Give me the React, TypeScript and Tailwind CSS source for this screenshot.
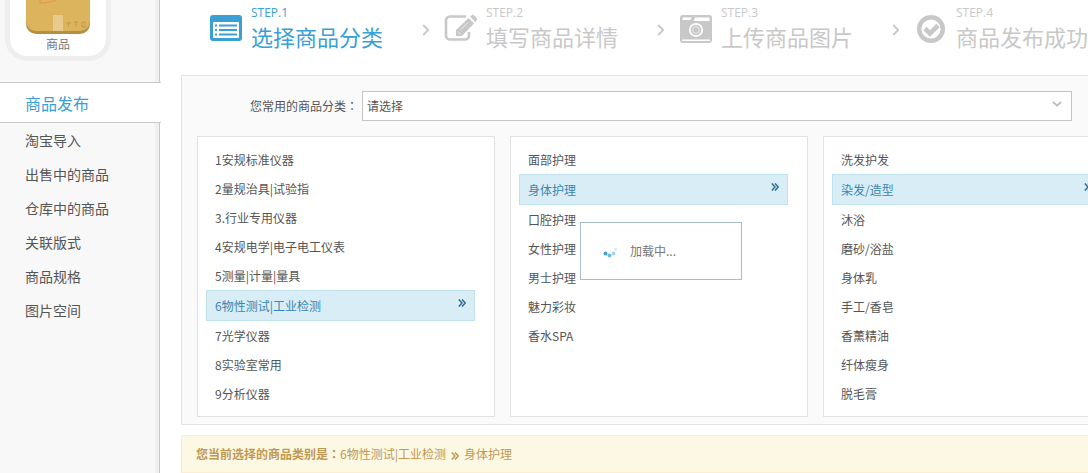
import { useState } from 'react'
import clsx from 'clsx'

const navItems = ['淘宝导入', '出售中的商品', '仓库中的商品', '关联版式', '商品规格', '图片空间']

const categories = [
  ['1安规标准仪器', '2量规治具|试验指', '3.行业专用仪器', '4安规电学|电子电工仪表', '5测量|计量|量具', '6物性测试|工业检测', '7光学仪器', '8实验室常用', '9分析仪器'],
  ['面部护理', '身体护理', '口腔护理', '女性护理', '男士护理', '魅力彩妆', '香水SPA'],
  ['洗发护发', '染发/造型', '沐浴', '磨砂/浴盐', '身体乳', '手工/香皂', '香薰精油', '纤体瘦身', '脱毛膏'],
]

const steps = [
  { label: 'STEP.1', title: '选择商品分类', icon: <ListIcon /> },
  { label: 'STEP.2', title: '填写商品详情', icon: <EditIcon /> },
  { label: 'STEP.3', title: '上传商品图片', icon: <CameraIcon /> },
  { label: 'STEP.4', title: '商品发布成功', icon: <CheckIcon /> },
]

export default function App() {
  const [selected, setSelected] = useState([5, 1, 1])

  const handleSelect = (column: number, index: number) => {
    setSelected(selected.map((value, i) => (i === column ? index : value)))
  }

  return (
    <div className="flex min-h-screen overflow-hidden bg-white font-['Noto_Sans_CJK_SC',sans-serif] text-xs text-[#555]">
      <Sidebar />
      <main className="min-w-max flex-1 pl-[21px]">
        <Steps />
        <section className="border border-[#e2e2e2] bg-[#fafafa] px-[15px] pt-[15px] pb-[7px]">
          <div className="flex items-center pl-[53px]">
            <label htmlFor="common">
              您常用的商品分类<Colon />
            </label>
            <div className="relative ml-1">
              <select
                id="common"
                className="block h-[30px] w-[710px] appearance-none border border-[#c4c4c4] bg-white px-1 text-xs text-[#555]"
              >
                <option>请选择</option>
              </select>
              <svg viewBox="0 0 10 6" className="pointer-events-none absolute top-2.5 right-2.5 h-1.5 w-2.5 text-[#bbb]">
                <path d="M1 1l4 3.6L9 1" fill="none" stroke="currentColor" strokeWidth="1.8" />
              </svg>
            </div>
          </div>
          <div className="relative mt-[15px] flex gap-[15px]">
            {categories.map((items, column) => (
              <CategoryList
                key={column}
                items={items}
                selected={selected[column]}
                onSelect={(index) => handleSelect(column, index)}
              />
            ))}
            <Loading />
          </div>
        </section>
        <p className="mt-2.5 flex h-[38px] items-center border border-[#fbeed5] bg-[#fcf8e3] px-3.5 text-[#c09853]">
          <strong>
            您当前选择的商品类别是<Colon />
          </strong>
          {categories[0][selected[0]]}
          <DoubleArrow className="mx-[5px] mt-1 h-2 w-2" />
          {categories[1][selected[1]]}
        </p>
      </main>
    </div>
  )
}

// the TC face centres the full-width colon in its box
function Colon() {
  return <span className="font-['Noto_Sans_CJK_TC',sans-serif]">：</span>
}

function Sidebar() {
  return (
    <aside className="flex w-40 shrink-0 flex-col">
      <div className="h-[82px] border-r border-[#c8c8c8] bg-[#f8f8f8]">
        <div className="h-full border-r-4 border-[#f0f0f0] pl-[5px]">
          <a
            href="#goods"
            className="flex h-[61px] w-[106px] flex-col items-center rounded-b-[22px] border-[5px] border-t-0 border-[#eee] bg-white text-[#777]"
          >
            <BoxIcon />
            <span className="leading-5">商品</span>
          </a>
        </div>
      </div>
      <a
        href="#publish"
        className="flex h-[41px] w-[161px] items-center border-y border-[#c8c8c8] bg-white pl-[25px] text-base text-[#3a9fd3]"
      >
        商品发布
      </a>
      <nav className="flex-1 border-r border-[#c8c8c8] bg-[#f8f8f8]">
        <ul className="h-full border-r-4 border-[#f0f0f0] pl-[25px] text-sm">
          {navItems.map((item) => (
            <li key={item}>
              <a href="#nav" className="block leading-[34px]">{item}</a>
            </li>
          ))}
        </ul>
      </nav>
    </aside>
  )
}

function Steps() {
  return (
    <ol className="flex h-[75px] w-0 pl-7">
      {steps.map((step, i) => (
        <li
          key={step.label}
          className={clsx('flex w-[235px] shrink-0', i === 0 ? 'text-[#3a9fd3]' : 'text-[#c8c8c8]')}
        >
          <div className="mt-3 h-8 w-[34px]">{step.icon}</div>
          <div className="ml-2 whitespace-nowrap">
            <div className="mt-[5px] font-['Open_Sans',sans-serif] leading-4">{step.label}</div>
            <div className="text-[22px] leading-[30px]">{step.title}</div>
          </div>
          {i < steps.length - 1 && (
            <svg viewBox="0 0 8 12" className="mt-6 mr-3.5 ml-auto h-3 w-2 text-[#c8c8c8]">
              <path d="M1.2 1l5 5-5 5" fill="none" stroke="currentColor" strokeWidth="1.8" />
            </svg>
          )}
        </li>
      ))}
    </ol>
  )
}

function CategoryList({
  items,
  selected,
  onSelect,
}: {
  items: string[]
  selected: number
  onSelect: (index: number) => void
}) {
  return (
    <ul className="w-[298px] shrink-0 border border-[#e2e2e2] bg-white py-2 pr-[19px] pl-2">
      {items.map((item, i) => (
        <li key={item}>
          <button
            type="button"
            onClick={() => onSelect(i)}
            className={clsx(
              'flex w-full justify-between border-x px-2 text-left leading-[29px]',
              i === selected ? 'border-y border-[#bfe3ec] bg-[#d9edf7] text-[#3a87ad]' : 'border-x-transparent'
            )}
          >
            {item}
            {i === selected && <DoubleArrow className="mt-2 h-2 w-2 text-[#31708f]" />}
          </button>
        </li>
      ))}
    </ul>
  )
}

function Loading() {
  return (
    <div
      role="status"
      className="absolute top-[86px] left-[383px] flex h-[58px] w-[162px] items-center border border-[#a9bccb] bg-white pl-[21px] text-[#777]"
    >
      <svg viewBox="0 0 16 16" className="h-4 w-4">
        <circle cx="3.500" cy="10.500" r="2" fill="#4d9fcb" />
        <circle cx="7.500" cy="12.500" r="2" fill="#74b9dc" />
        <circle cx="11.500" cy="10.500" r="1.900" fill="#a8d3e8" />
        <circle cx="13.500" cy="6.500" r="1.700" fill="#dceef7" />
      </svg>
      <span className="ml-3">加载中...</span>
    </div>
  )
}

function DoubleArrow({ className }: { className: string }) {
  return (
    <svg viewBox="0 0 10 10" className={className}>
      <path d="M1 .5L5 5 1 9.500M5 .5L9 5 5 9.500" fill="none" stroke="currentColor" strokeWidth="1.800" />
    </svg>
  )
}

function BoxIcon() {
  return (
    <svg viewBox="0 0 64 34" className="h-[34px] w-16 shrink-0">
      <path d="M0 0h64v24a10 10 0 0 1-10 10H10A10 10 0 0 1 0 24z" fill="#b58f42" />
      <path d="M0 0h64v21a10 10 0 0 1-10 10H10A10 10 0 0 1 0 21z" fill="#ddb45e" />
      <path d="M14 0v3c6 0 12-1 16-3" fill="none" stroke="#e39a4c" strokeWidth="1.2" />
      <path d="M27 15h10v16H27z" fill="#e8cb8c" />
      <path d="M40 23h5M42.500 22v4M48 22h4M50 22v5M56 22h3v5h-3z" fill="none" stroke="#c39849" strokeWidth="1" />
    </svg>
  )
}

function ListIcon() {
  return (
    <svg viewBox="0 0 34 32">
      <rect x="1" y="3" width="32" height="26" rx="3" fill="currentColor" />
      <rect x="4" y="10" width="26" height="16" rx="1" fill="#fff" />
      <path d="M6 13.500h2M6 18h2M6 22.500h2M10 13.500h18M10 18h18M10 22.500h18" stroke="currentColor" strokeWidth="2" />
    </svg>
  )
}

function EditIcon() {
  return (
    <svg viewBox="0 0 34 32">
      <path
        d="M22 4.500H6A4 4 0 0 0 2 8.500v15a4 4 0 0 0 4 4h15a4 4 0 0 0 4-4V20"
        fill="none"
        stroke="currentColor"
        strokeWidth="2.600"
      />
      <path d="M12 24v-6L24.500 6l5.500 5.500L18 24z" fill="currentColor" />
      <path d="M26 4.600l1.300-1.200q1.500-1.200 3 0l2.300 2.500q1.200 1.300 0 2.600L31.300 10z" fill="currentColor" />
      <path d="M14 19.500l2.500 2.500M17 17.500l7-7" stroke="#fff" strokeWidth="0.700" />
    </svg>
  )
}

function CameraIcon() {
  return (
    <svg viewBox="0 0 34 32">
      <rect x="1" y="3" width="32" height="28" rx="3" fill="currentColor" />
      <path d="M3.500 8V6.500q0-1 1-1H13l-2 2.500zM16 5.500h14.500V9H14.500z" fill="#fff" />
      <rect x="3" y="27.500" width="28" height="1.500" fill="#fff" />
      <circle cx="17" cy="18" r="7" fill="#fff" />
      <circle cx="17" cy="18" r="5.300" fill="currentColor" />
      <circle cx="17" cy="18" r="3.300" fill="none" stroke="#fff" strokeWidth="0.600" />
    </svg>
  )
}

function CheckIcon() {
  return (
    <svg viewBox="0 0 34 32">
      <circle cx="17" cy="17" r="11.800" fill="none" stroke="currentColor" strokeWidth="4.400" />
      <path d="M11 16.500l5 5 8-8" fill="none" stroke="currentColor" strokeWidth="4.600" />
    </svg>
  )
}
